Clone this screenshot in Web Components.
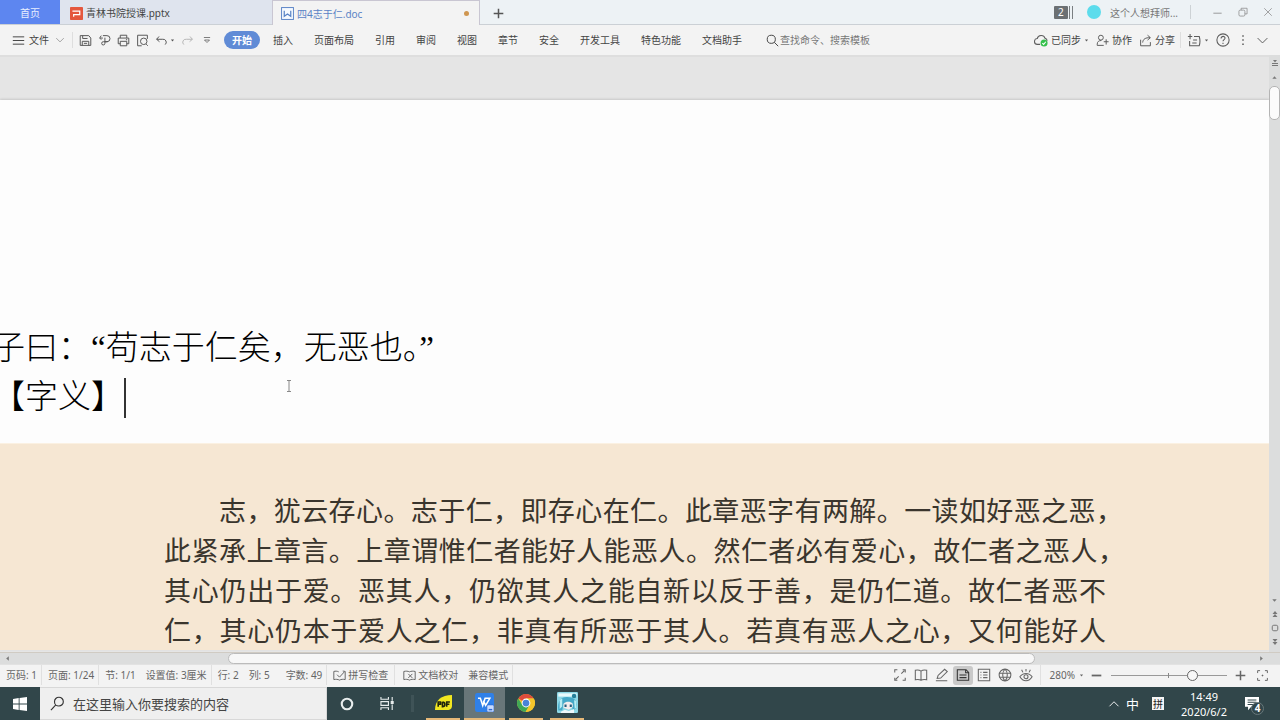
<!DOCTYPE html>
<html lang="zh-CN">
<head>
<meta charset="utf-8">
<title>四4志于仁.doc</title>
<style>
html, body { height: 100%; margin: 0; }
body { font: 10px/14px "Noto Sans", "Noto Sans CJK SC", sans-serif; color: #444; overflow: hidden; }
</style>
</head>
<body>
<writer-app></writer-app>
<script>
const RESET = `
*, *::before, *::after { box-sizing: border-box; }
button, input { font: inherit; color: inherit; background: none; border: 0; padding: 0; margin: 0; outline: none; }
button { display: inline-flex; align-items: center; justify-content: center; white-space: nowrap; flex: none; }
`;

function define(name, css, html) {
  const template = document.createElement('template');
  template.innerHTML = `<style>${RESET}${css}</style>${html}`;
  customElements.define(name, class extends HTMLElement {
    constructor() {
      super();
      this.attachShadow({ mode: 'open' }).append(template.content.cloneNode(true));
    }
  });
}

/* Stroke icons on a 16 x 16 grid */
const ICONS = {
  menu: '<path d="M1 3.5h14M1 8h14M1 12.5h14"/>',
  chevron: '<path d="M2 5l6 6 6-6"/>',
  up: '<path d="M2 11l6-6 6 6"/>',
  caret: '<path d="M3 5h10l-5 6z" fill="currentColor" stroke="none"/>',
  caretup: '<path d="M3 11h10L8 5z" fill="currentColor" stroke="none"/>',
  caretleft: '<path d="M11 3v10L5 8z" fill="currentColor" stroke="none"/>',
  caretright: '<path d="M5 3v10l6-5z" fill="currentColor" stroke="none"/>',
  save: '<path d="M1.5 2h10.5l2.5 3v9h-13zM4 14V9h8v5M4.500 2v3.500h6M6 11.500h4"/>',
  export: '<path d="M4 2l-2 3 2 2M2.500 5H6M6 2h5a3.700 3.700 0 010 7.500H8.500V4.500M8.500 9.500v2a2 2 0 11-2-2H12"/>',
  print: '<path d="M4 5V1.500h8V5M4 12H1.500V5h13v7H12M4 9h8v5.500H4zM11 7h1.500"/>',
  preview: '<path d="M14 6V1.500H2v13h5M14.500 14.500L12.500 12.500"/><circle cx="9.500" cy="9" r="4"/>',
  undo: '<path d="M5 3L2 6.500 5.500 9.500M2 6.500h7.500a3.700 3.700 0 013 6.500"/>',
  redo: '<path d="M11 3l3 3.500-3.500 3M14 6.500H6.500a3.700 3.700 0 00-3 6.500"/>',
  more: '<path d="M3 4h10M4 8l4 4 4-4z"/>',
  search: '<circle cx="6.500" cy="6.500" r="5"/><path d="M10.200 10.200L15 15"/>',
  find: '<circle cx="9.500" cy="6" r="4.700"/><path d="M6.200 9.500L1 15"/>',
  cloud: '<path d="M7 13H4a3.300 3.300 0 01-.3-6.600A4.600 4.600 0 0112.600 6 3.200 3.200 0 0115 9"/><circle cx="11.500" cy="11.500" r="4" fill="#35c04c" stroke="none"/><path d="M9.500 11.500l1.500 1.500 2.500-3" stroke="#fff"/>',
  people: '<circle cx="6" cy="4.500" r="3"/><path d="M9.500 14H1.500v-1.500c0-3 2-4.500 5-4.500M9.500 9.500h6M12.500 6.500V13"/>',
  share: '<path d="M2 7v7.500h12V10M4.500 10.500C5 6 8 4.500 13.500 4.500M10.500 1.500l3.500 3-3.500 3"/>',
  switch: '<path d="M3 9v5.500h11c1-3 1-7 0-10.500H8M6 11.500h5M7 8h4.500M1 4h5M3.500 1v6"/>',
  help: '<circle cx="8" cy="8" r="7"/><path d="M5.800 6.200C5.800 3 10.500 3.200 10.300 6c-.1 1.500-2.300 1.700-2.300 3.500M8 11v1.500"/>',
  dots: '<path d="M8 1.500v2M8 7v2M8 12.500v2" stroke-width="2"/>',
  min: '<path d="M2 9h12"/>',
  restore: '<rect x="1.500" y="5" width="9.500" height="9.500" rx="2"/><path d="M5 5V2h9.500v9H11"/>',
  close: '<path d="M2 2l12 12M14 2L2 14"/>',
  plus: '<path d="M8 1v14M1 8h14" stroke-width="2.200"/>',
  minus: '<path d="M1 8h14" stroke-width="2.600"/>',
  full: '<path d="M2 5V2h3M11 2h3v3M14 11v3h-3M5 14H2v-3M9.500 6.500L13 3M6.500 9.500L3 13"/>',
  book: '<path d="M8 3.500C6 2 4 2 1.500 2.500v11c2.500-.5 4.500-.5 6.500.5 2-1 4-1 6.500-.5v-11C12 2 10 2 8 3.500zM8 3.500V14"/>',
  pen: '<path d="M2.500 12l1-3.500L11 1.500 14 4 6.500 11.500zM1 14.500h13"/>',
  page: '<path d="M1.500 2h10l3 3v9h-13zM11 2v3.500h3.500M4 8h8M4 11h8"/>',
  outline: '<path d="M1.500 1.500h13v13h-13zM4 5h1M7 5h5M4 8h1M7 8h5M4 11h1M7 11h5"/>',
  globe: '<circle cx="8" cy="8" r="6.700"/><path d="M1.500 6h13M1.500 10.500h13M8 1.300C4.500 4 4.500 12 8 14.700M8 1.300c3.500 2.700 3.500 10.700 0 13.400"/>',
  eye: '<path d="M1 10c3.500-5 10.500-5 14 0-3.500 6-10.500 6-14 0zM8 1v3M3 2l1.500 3M13 2l-1.500 3"/><circle cx="8" cy="10" r="2.300"/>',
  fit: '<path d="M2 5V2h3M11 2h3v3M14 11v3h-3M5 14H2v-3M7 8h2M8 7v2"/>',
  spell: '<path d="M7 3.500C5 2.500 3 2.500 1 3v10c2.500-.5 5-.5 7 .7 2-1.200 4.500-1.200 7-.7V3l-3-.5M5 7l3 3 6-6.500"/>',
  proof: '<path d="M8 3.500C6 2.500 3.500 2.500 1 3v10c2.500-.5 5-.5 7 .7 2-1.200 4.500-1.200 7-.7V3c-2.500-.5-5-.5-7 .5M6.500 6l5 5M11.500 6l-5 5"/>',
  split: '<path d="M2 9h12M2 13h12" stroke-width="2"/><path d="M4 2h8L8 7z" fill="currentColor" stroke="none"/>',
  prev: '<path d="M3 8l5-6 5 6zM3 14l5-6 5 6z" fill="currentColor" stroke="none"/>',
  next: '<path d="M3 2l5 6 5-6zM3 8l5 6 5-6z" fill="currentColor" stroke="none"/>',
  target: '<rect x="2.500" y="2.500" width="11" height="11" rx="3" stroke-width="2"/>',
  ppt: '<rect width="16" height="16" rx="1" fill="#e4573d" stroke="none"/><path d="M3 5h9v4.500H4.500V12" stroke="#fff" stroke-width="1.500"/>',
  doc: '<rect x=".7" y=".7" width="14.600" height="14.600" fill="#f6faff"/><path d="M4 4.500v7l4-3 4 3v-7" stroke-width="1.500"/>',
  windows: '<path d="M0 2.200l6.500-1v6.300H0zM7.500 1L16 0v7.500H7.500zM0 8.500h6.500v6.300l-6.500-1zM7.500 8.500H16V16l-8.500-1.100z" fill="#fff" stroke="none"/>',
  cortana: '<circle cx="8" cy="8" r="6" stroke-width="2.400"/>',
  task: '<path d="M1 1v2.500h8V1M1 15v-2.500h8V15M1 6h8v4H1zM13 1v4M13 9v6"/><path d="M12 6h2v2h-2z" fill="currentColor"/>',
  note: '<path d="M0 0h16v11H7l-3.500 4v-4H0z" fill="#fff" stroke="none"/><path d="M3 3.500h10M3 6h10M3 8.500h7" stroke="#31464a"/>',
  foxit: '<path d="M0 15C0 6 6 1 16 1v10c0 3-2 4-4 4z" fill="#f2e720" stroke="none"/><path d="M3 12V7.500h2.200v2H3M7 7.500v4.500c3 0 3-4.500 0-4.500M14 7.500h-3V12M11 9.700h2.500" stroke="#20240c" stroke-width="1.500"/>',
  wps: '<rect width="16" height="16" rx="2" fill="#2f80e8" stroke="none"/><path d="M2.500 4.500h2l2 6 2-6h4l-3.500 6-2-4" stroke="#fff" stroke-width="1.300"/><rect x="10" y="10" width="6" height="6" rx="1" fill="#c9dcff" stroke="#2f68d0" stroke-width=".6"/><path d="M11.500 14h3" stroke="#2f68d0"/>',
  chrome: '<g stroke="none"><circle cx="8" cy="8" r="8" fill="#f4c52b"/><path d="M8 8L1.100 4A8 8 0 0114.900 4H8z" fill="#de4b3c"/><path d="M1.100 4A8 8 0 007.500 16l3.700-6.300L8 8l-3.300 1.500z" fill="#3fa757"/><path d="M14.900 4H8v4l3.400 1.500L7.800 16A8 8 0 0014.900 4z" fill="#f4c52b"/><circle cx="8" cy="8" r="3.900" fill="#fff"/><circle cx="8" cy="8" r="3" fill="#4a83d8"/></g>',
  anime: '<g stroke="none"><rect width="16" height="16" rx="1" fill="#8ed8e6"/><path d="M1 1h14v2.500H1z" fill="#e8fafc"/><path d="M1 14C0 6 4 3 9 4c5 0 7 4 5 9l-2 1-1-5-3 2-3-2-1 5z" fill="#45a9c8"/><path d="M5 9c2-2 5-2 7 0v2.500l-3 2-4-1.500z" fill="#f4ecec"/><path d="M5.700 9.500h1.600v2H5.700zM9.700 9.500h1.600v2H9.700z" fill="#255d7d"/><path d="M3 15l3-1.500 3 1 4-1.500V16H3z" fill="#eef8fb"/><circle cx="13" cy="3" r="1.700" fill="#257f99"/><path d="M2 6l2-1v6l-2 2zM13 6l1.500 1v5l-1 1z" fill="#b9edf3"/></g>'
};

customElements.define('ui-icon', class extends HTMLElement {
  connectedCallback() {
    if (this.shadowRoot) return;
    const size = this.getAttribute('size') || 13;
    this.attachShadow({ mode: 'open' }).innerHTML = `
      <style>:host { display: inline-flex; flex: none; } svg { display: block; }</style>
      <svg viewBox="0 0 16 16" width="${size}" height="${size}" fill="none" stroke="currentColor" stroke-width="1.2" aria-hidden="true">${ICONS[this.getAttribute('name')]}</svg>`;
  }
});

define('tab-bar', `
:host { display: flex; height: 25px; background: #edf2f5; border-bottom: 1px solid #cbd0d5; flex: none; }
.home { width: 60px; height: 24px; background: #5d86f0; color: #e8efff; padding-top: 2px; }
.tab { height: 24px; width: 212px; justify-content: flex-start; padding: 2px 10px 0; gap: 3px; background: #dfe4ee; }
.active { width: 208px; height: 25px; padding: 2px 10px 1px 8px; background: #f3f3f3; color: #5a83c6; border: 1px solid #c9c6d2; border-bottom: 0; }
.dot { width: 5px; height: 5px; border-radius: 50%; background: #cf9650; margin-left: auto; }
.new { width: 36px; color: #555; padding-top: 2px; }
.count { background: #6b7073; color: #fff; width: 14px; height: 13px; line-height: 13px; border-radius: 1px; }
.sessions { margin-left: auto; align-self: center; }
.bars { width: 4px; height: 13px; margin-left: 1px; border: solid #7a7f82; border-width: 0 1px; }
.avatar { width: 14px; height: 14px; border-radius: 50%; background: #5cdcec; margin: 0 9px 0 14px; align-self: center; }
.user { color: #777; margin-right: 12px; padding-top: 1px; }
.sep { width: 1px; height: 14px; background: #cdd2d5; align-self: center; margin-right: 14px; }
.win { width: 25px; color: #888; }
`, `
<button class="home">首页</button>
<button class="tab"><ui-icon name="ppt"></ui-icon>青林书院授课.pptx</button>
<button class="tab active"><ui-icon name="doc"></ui-icon>四4志于仁.doc<span class="dot"></span></button>
<button class="new" aria-label="新建"><ui-icon name="plus" size="11"></ui-icon></button>
<button class="sessions"><span class="count">2</span><span class="bars"></span></button>
<span class="avatar"></span>
<button class="user">这个人想拜师...</button>
<span class="sep"></span>
<button class="win" aria-label="最小化"><ui-icon name="min" size="11"></ui-icon></button>
<button class="win" aria-label="还原"><ui-icon name="restore" size="10"></ui-icon></button>
<button class="win" aria-label="关闭"><ui-icon name="close" size="10"></ui-icon></button>
`);

define('ribbon-bar', `
:host { display: flex; align-items: center; height: 30px; background: #f3f3f3; padding: 0 11px 0 12px; flex: none; }
.file { gap: 4px; }
.file ui-icon:last-child { margin-left: 2px; color: #888; }
.sep { width: 1px; height: 16px; background: #dedede; margin: 0 3px 0 7px; }
.tool { width: 19px; height: 20px; color: #555; }
.undo { width: 26px; gap: 2px; }
.dim { color: #b5b5b5; }
nav { display: flex; align-items: center; gap: 21px; margin-left: 8px; }
nav .on { width: 36px; height: 18px; border-radius: 9px; background: #608bd6; color: #fff; font-weight: 700; margin-right: -8px; }
label { display: flex; align-items: center; gap: 1px; margin-left: 3px; }
label input { width: 110px; }
input::placeholder { color: #777; opacity: 1; }
.right { display: flex; align-items: center; margin-left: auto; gap: 7px; }
.right button { gap: 3px; }
.right ui-icon { color: #5c5c5c; }
.right .sep { margin: 0 -1px 0 -2px; }
`, `
<button class="file"><ui-icon name="menu"></ui-icon>文件<ui-icon name="chevron" size="10"></ui-icon></button>
<span class="sep"></span>
<button class="tool" aria-label="保存"><ui-icon name="save"></ui-icon></button>
<button class="tool" aria-label="输出"><ui-icon name="export"></ui-icon></button>
<button class="tool" aria-label="打印"><ui-icon name="print"></ui-icon></button>
<button class="tool" aria-label="打印预览"><ui-icon name="preview"></ui-icon></button>
<button class="tool undo" aria-label="撤销"><ui-icon name="undo"></ui-icon><ui-icon name="caret" size="5"></ui-icon></button>
<button class="tool dim" aria-label="恢复"><ui-icon name="redo"></ui-icon></button>
<button class="tool" aria-label="更多"><ui-icon name="more" size="10"></ui-icon></button>
<nav>
<button class="on">开始</button><button>插入</button><button>页面布局</button><button>引用</button><button>审阅</button><button>视图</button><button>章节</button><button>安全</button><button>开发工具</button><button>特色功能</button><button>文档助手</button>
<label aria-label="查找命令"><ui-icon name="search"></ui-icon><input placeholder="查找命令、搜索模板"></label>
</nav>
<div class="right">
<button><ui-icon name="cloud" size="14"></ui-icon>已同步<ui-icon name="caret" size="5"></ui-icon></button>
<button><ui-icon name="people"></ui-icon>协作</button>
<button><ui-icon name="share"></ui-icon>分享</button>
<span class="sep"></span>
<button aria-label="切换"><ui-icon name="switch" size="14"></ui-icon><ui-icon name="caret" size="5"></ui-icon></button>
<button aria-label="帮助"><ui-icon name="help" size="14"></ui-icon></button>
<button aria-label="更多"><ui-icon name="dots" size="12"></ui-icon></button>
<button aria-label="折叠"><ui-icon name="chevron"></ui-icon></button>
</div>
`);

define('doc-view', `
:host { display: grid; grid-template-columns: minmax(0, 1fr) 11px; grid-template-rows: minmax(0, 1fr) 12px; flex: 1; min-height: 0; background: #e5e5e5; }
.canvas { overflow: hidden; padding-top: 43px; position: relative; border-top: 2px solid #dedede; }
.sheet { background: #fdfdfd; padding-top: 224px; box-shadow: 0 -1px 2px #c8c8c8; }
.text { display: flex; align-items: center; margin: 0 0 0 -8px; font: 300 33px/49px "Liberation Serif", "Noto Sans CJK SC", serif; color: #000; text-spacing-trim: space-all; white-space: nowrap; }
.half { font-feature-settings: "halt"; }
.caret { width: 2px; height: 40px; background: #333; }
figure { margin: 21px 0 0; padding: 46px 20px 0 164px; background: #f6e7d3; border-top: 1px solid #fbf1e2; }
figure p { margin: 0; max-width: 969px; font: 400 27px/40px "Noto Sans CJK SC", sans-serif; color: #3a352d; text-align: justify; text-align-last: justify; text-spacing-trim: space-all; white-space: nowrap; }
.first { padding: 0 10px 0 55px; }
.hang { padding-right: 8px; }
.short { padding-right: 27px; }
.beam { position: absolute; left: 285px; top: 322px; color: #888; }
.vbar { display: flex; flex-direction: column; align-items: center; background: #dcdddd; color: #777; padding: 1px 0 3px; }
.vbar button { height: 14px; width: 11px; }
.vthumb { width: 11px; height: 34px; border: 1px solid #b4b4b4; border-radius: 5px; background: #fbfbfb; margin: 2px 0 auto; }
.hbar { grid-column: 1 / -1; display: flex; align-items: center; background: #dcdddd; color: #777; border-top: 1px solid #d0cbc3; padding: 0 11px 0 0; }
.hbar button { width: 15px; height: 10px; }
.track { flex: 1; display: grid; grid-template-columns: 213fr 807fr 219fr; }
.hthumb { grid-column: 2; height: 11px; border: 1px solid #bbb; border-radius: 6px; background: #f7f7f7; }
`, `
<div class="canvas">
<article class="sheet">
<p class="text"><span>子曰：“苟志于仁矣，无恶也<span class="half">。</span>”</span></p>
<p class="text"><span>【字义】</span><span class="caret"></span></p>
<figure>
<p class="first">志，犹云存心。志于仁，即存心在仁。此章恶字有两解。一读如好恶之恶，</p>
<p class="hang">此紧承上章言。上章谓惟仁者能好人能恶人。然仁者必有爱心，故仁者之恶人，</p>
<p class="short">其心仍出于爱。恶其人，仍欲其人之能自新以反于善，是仍仁道。故仁者恶不</p>
<p class="short">仁，其心仍本于爱人之仁，非真有所恶于其人。若真有恶人之心，又何能好人</p>
</figure>
</article>
<svg class="beam" width="8" height="14" viewBox="0 0 8 14" fill="none" stroke="currentColor"><path d="M2 1.500h4M2 12.500h4M4 1.500v11"/></svg>
</div>
<div class="vbar">
<button aria-label="拆分"><ui-icon name="split" size="8"></ui-icon></button>
<button aria-label="向上"><ui-icon name="caretup" size="7"></ui-icon></button>
<div class="vthumb"></div>
<button aria-label="向下"><ui-icon name="caret" size="7"></ui-icon></button>
<button aria-label="上一页"><ui-icon name="prev" size="8"></ui-icon></button>
<button aria-label="选择对象"><ui-icon name="target" size="8"></ui-icon></button>
<button aria-label="下一页"><ui-icon name="next" size="8"></ui-icon></button>
</div>
<div class="hbar">
<button aria-label="向左"><ui-icon name="caretleft" size="7"></ui-icon></button>
<div class="track"><div class="hthumb"></div></div>
<button aria-label="向右"><ui-icon name="caretright" size="7"></ui-icon></button>
</div>
`);

define('status-bar', `
:host { display: flex; align-items: center; height: 23px; flex: none; background: #f3f3f3; color: #666; padding: 0 11px 2px 6px; border-top: 1px solid #e2e2e2; }
.cell { margin-right: 10px; white-space: nowrap; }
.wide { margin-right: 16px; }
.line { border-right: 1px solid #e0e0e0; padding-right: 4px; margin-right: 6px; align-self: stretch; display: flex; align-items: center; }
.loose { padding-right: 6px; margin-right: 8px; }
button { gap: 2px; }
.views { display: flex; margin-left: auto; gap: 1px; border-right: 1px solid #e0e0e0; padding-right: 4px; margin-right: 9px; align-self: stretch; align-items: center; }
.views button { width: 20px; height: 19px; border-radius: 3px; }
.views .on { background: #c9c9c9; color: #333; }
.zoom { gap: 4px; margin-right: 7px; }
input { appearance: none; width: 116px; height: 14px; margin: 0 8px 0 9px; background: linear-gradient(#888, #888) 57px 50% / 1px 5px no-repeat, linear-gradient(#999, #999) 0 50% / 100% 1px no-repeat; }
input::-webkit-slider-thumb { appearance: none; width: 11px; height: 11px; border-radius: 50%; border: 1px solid #666; background: #f8f8f8; }
.fit { margin-left: 10px; }
`, `
<span class="cell line">页码: 1</span>
<span class="cell line">页面: 1/24</span>
<span class="cell">节: 1/1</span>
<span class="cell line">设置值: 3厘米</span>
<span class="cell">行: 2</span>
<span class="cell wide">列: 5</span>
<span class="cell line">字数: 49</span>
<button class="cell line loose"><ui-icon name="spell"></ui-icon>拼写检查</button>
<button class="cell"><ui-icon name="proof"></ui-icon>文档校对</button>
<span class="cell line">兼容模式</span>
<div class="views">
<button aria-label="全屏"><ui-icon name="full" size="14"></ui-icon></button>
<button aria-label="阅读版式"><ui-icon name="book" size="14"></ui-icon></button>
<button aria-label="写作模式"><ui-icon name="pen" size="14"></ui-icon></button>
<button aria-label="页面视图" class="on"><ui-icon name="page" size="14"></ui-icon></button>
<button aria-label="大纲"><ui-icon name="outline" size="14"></ui-icon></button>
<button aria-label="Web版式"><ui-icon name="globe" size="14"></ui-icon></button>
<button aria-label="护眼模式"><ui-icon name="eye" size="14"></ui-icon></button>
</div>
<button class="zoom">280%<ui-icon name="caret" size="5"></ui-icon></button>
<button aria-label="缩小"><ui-icon name="minus" size="11"></ui-icon></button>
<input type="range" min="0" max="100" value="72" aria-label="显示比例">
<button aria-label="放大"><ui-icon name="plus" size="11"></ui-icon></button>
<button aria-label="最佳显示比例" class="fit"><ui-icon name="fit" size="13"></ui-icon></button>
`);

define('task-bar', `
:host { display: flex; align-items: stretch; height: 33px; flex: none; background: #31464a; color: #fff; }
.start { width: 40px; }
.search { display: flex; align-items: center; gap: 8px; width: 287px; padding: 0 10px; background: #efefef; color: #333; border: 1px solid #d8d8d8; border-left: 0; }
.search input { flex: 1; min-width: 0; font-size: 13px; line-height: 20px; }
input::placeholder { color: #444; opacity: 1; }
.plain { width: 40px; color: #e8eded; }
.sep { width: 3px; height: 17px; background: #3f5357; margin: 0 12px 0 4px; align-self: center; }
.app { width: 34px; margin-right: 4px; border-bottom: 2px solid #e5b878; }
.on { background: #687679; width: 41px; }
.chrome { margin-right: 7px; }
.tray { display: flex; align-items: center; margin-left: auto; padding-right: 21px; }
.ime { font-size: 13px; margin: 0 13px 0 6px; }
.pin { width: 12px; height: 13px; background: #f5f5f5; color: #222; font-size: 10px; margin-right: 17px; }
.clock { text-align: center; font-size: 11px; line-height: 15px; margin-right: 18px; }
.note { position: relative; }
.badge { position: absolute; left: 6px; top: 5px; width: 13px; height: 13px; border-radius: 50%; background: #31464a; border: 1px solid #68787b; font-size: 10px; line-height: 11px; text-align: center; font-weight: 700; }
`, `
<button class="start" aria-label="开始"><ui-icon name="windows" size="14"></ui-icon></button>
<label class="search" aria-label="搜索"><ui-icon name="find" size="15"></ui-icon><input placeholder="在这里输入你要搜索的内容"></label>
<button class="plain" aria-label="Cortana"><ui-icon name="cortana" size="14"></ui-icon></button>
<button class="plain" aria-label="任务视图"><ui-icon name="task" size="15"></ui-icon></button>
<span class="sep"></span>
<button class="app" aria-label="PDF"><ui-icon name="foxit" size="17"></ui-icon></button>
<button class="app on" aria-label="WPS"><ui-icon name="wps" size="19"></ui-icon></button>
<button class="app chrome" aria-label="Chrome"><ui-icon name="chrome" size="18"></ui-icon></button>
<button class="app" aria-label="动漫"><ui-icon name="anime" size="21"></ui-icon></button>
<div class="tray">
<button aria-label="显示隐藏的图标"><ui-icon name="up" size="12"></ui-icon></button>
<button class="ime">中</button>
<button class="pin">拼</button>
<div class="clock"><div>14:49</div><div>2020/6/2</div></div>
<button class="note" aria-label="通知"><ui-icon name="note" size="14"></ui-icon><span class="badge">4</span></button>
</div>
`);

define('writer-app', `
:host { display: flex; flex-direction: column; height: 100vh; min-height: 400px; }
`, `<tab-bar></tab-bar><ribbon-bar></ribbon-bar><doc-view></doc-view><status-bar></status-bar><task-bar></task-bar>`);
</script>
</body>
</html>
